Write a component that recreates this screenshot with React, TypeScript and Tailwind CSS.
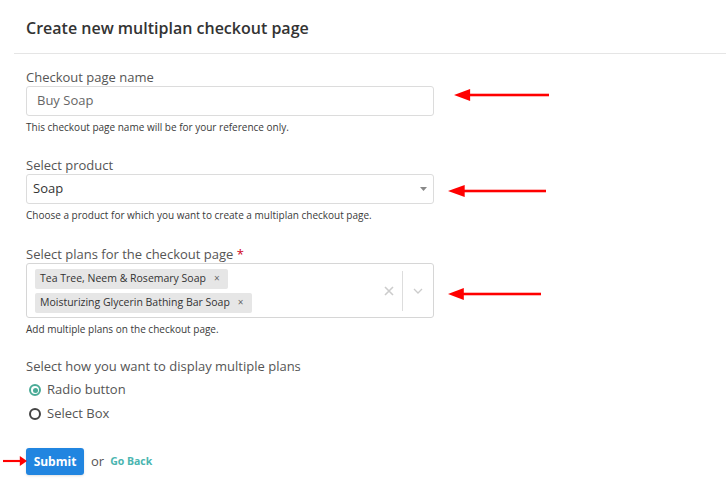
import React from 'react';

const Arrow = ({ className, dir = 'left' }: { className: string; dir?: 'left' | 'right' }) => (
  <svg className={className} viewBox="0 0 100 14" preserveAspectRatio="none" fill="#f00">
    {dir === 'left' ? (
      <>
        <polygon points="0,7 17,0 17,14" />
        <rect x="14" y="5.5" width="86" height="3" />
      </>
    ) : (
      <>
        <polygon points="100,7 70,0 70,14" />
        <rect x="0" y="5.5" width="75" height="3" />
      </>
    )}
  </svg>
);

const Tag = ({ label }: { label: string }) => (
  <div className="flex items-center h-[20px] bg-[#e6e6e6] rounded-[2px] pl-[5px] pr-[8px] text-[10.5px] text-[#333] w-fit">
    <span>{label}</span>
    <span className="ml-[8px] text-[10px] text-[#666]">×</span>
  </div>
);

export default function App() {
  return (
    <div className="relative w-[726px] h-[488px] bg-white overflow-hidden" style={{ fontFamily: '"Open Sans", Lato, sans-serif' }}>
      <div className="ml-[14px] h-[54px] border-b border-[#e5e5e5] pl-[12px] pt-[16px]">
        <h1 className="text-[16px] leading-[24px] text-[#333] font-semibold">Create new multiplan checkout page</h1>
      </div>

      <div className="pl-[26px] w-[434px]">
        <div className="mt-[14px]">
          <label className="block text-[13px] leading-[18px] text-[#555]">Checkout page name</label>
          <div className="h-[30px] border border-[#dcdcdc] rounded-[3px] flex items-center pl-[10px] text-[13px] text-[#666]">
            Buy Soap
          </div>
          <p className="mt-[5px] text-[10px] leading-[12px] text-[#3a3a3a]">This checkout page name will be for your reference only.</p>
        </div>

        <div className="mt-[23px]">
          <label className="block text-[13px] leading-[18px] text-[#555]">Select product</label>
          <div className="h-[30px] border border-[#dcdcdc] rounded-[3px] flex items-center justify-between pl-[6px] pr-[6px] text-[13px] text-[#333]">
            <span>Soap</span>
            <svg width="7" height="4" viewBox="0 0 7 4"><polygon points="0,0 7,0 3.5,4" fill="#888" /></svg>
          </div>
          <p className="mt-[5px] text-[10px] leading-[12px] text-[#3a3a3a]">Choose a product for which you want to create a multiplan checkout page.</p>
        </div>

        <div className="mt-[24px]">
          <label className="block text-[13px] leading-[18px] text-[#555]">
            Select plans for the checkout page <span className="text-[#d0021b]">*</span>
          </label>
          <div className="h-[55px] border border-[#d6d6d6] rounded-[3px] flex items-center">
            <div className="flex-1 flex flex-col gap-[4px] pl-[8px]">
              <Tag label="Tea Tree, Neem & Rosemary Soap" />
              <Tag label="Moisturizing Glycerin Bathing Bar Soap" />
            </div>
            <svg width="10" height="10" viewBox="0 0 10 10" className="mr-[8px]" stroke="#ccc" strokeWidth="1.6">
              <path d="M1 1L9 9M9 1L1 9" />
            </svg>
            <div className="w-px h-[40px] bg-[#ddd]" />
            <svg width="10" height="6" viewBox="0 0 10 6" className="mx-[10px]" fill="none" stroke="#ccc" strokeWidth="1.3">
              <path d="M1 1L5 5L9 1" />
            </svg>
          </div>
          <p className="mt-[5px] text-[10px] leading-[12px] text-[#3a3a3a]">Add multiple plans on the checkout page.</p>
        </div>

        <div className="mt-[22px]">
          <label className="block text-[13px] leading-[18px] text-[#555]">Select how you want to display multiple plans</label>
          <div className="mt-[6px] flex flex-col gap-[6px] pl-[3px]">
            <div className="flex items-center gap-[6px] h-[18px] text-[13px] text-[#555] font-medium">
              <span className="w-[12px] h-[12px] rounded-full border-2 border-[#4aab97] flex items-center justify-center">
                <span className="w-[5px] h-[5px] rounded-full bg-[#4aab97]" />
              </span>
              Radio button
            </div>
            <div className="flex items-center gap-[6px] h-[18px] text-[13px] text-[#555] font-medium">
              <span className="w-[12px] h-[12px] rounded-full border-2 border-[#444]" />
              Select Box
            </div>
          </div>
        </div>

        <div className="mt-[25px] flex items-center">
          <button className="h-[27px] w-[58px] rounded-[3px] bg-[#2185e0] text-white text-[12px] font-bold shadow-sm">Submit</button>
          <span className="ml-[7px] text-[13px] text-[#555]">or</span>
          <span className="ml-[6px] text-[10.5px] font-bold text-[#4bb5b0]">Go Back</span>
        </div>
      </div>

      <Arrow className="absolute left-[454px] top-[89px] w-[95px] h-[12px]" />
      <Arrow className="absolute left-[448px] top-[185px] w-[98px] h-[12px]" />
      <Arrow className="absolute left-[448px] top-[288px] w-[93px] h-[12px]" />
      <Arrow dir="right" className="absolute left-[3px] top-[456px] w-[24px] h-[10px]" />
    </div>
  );
}
